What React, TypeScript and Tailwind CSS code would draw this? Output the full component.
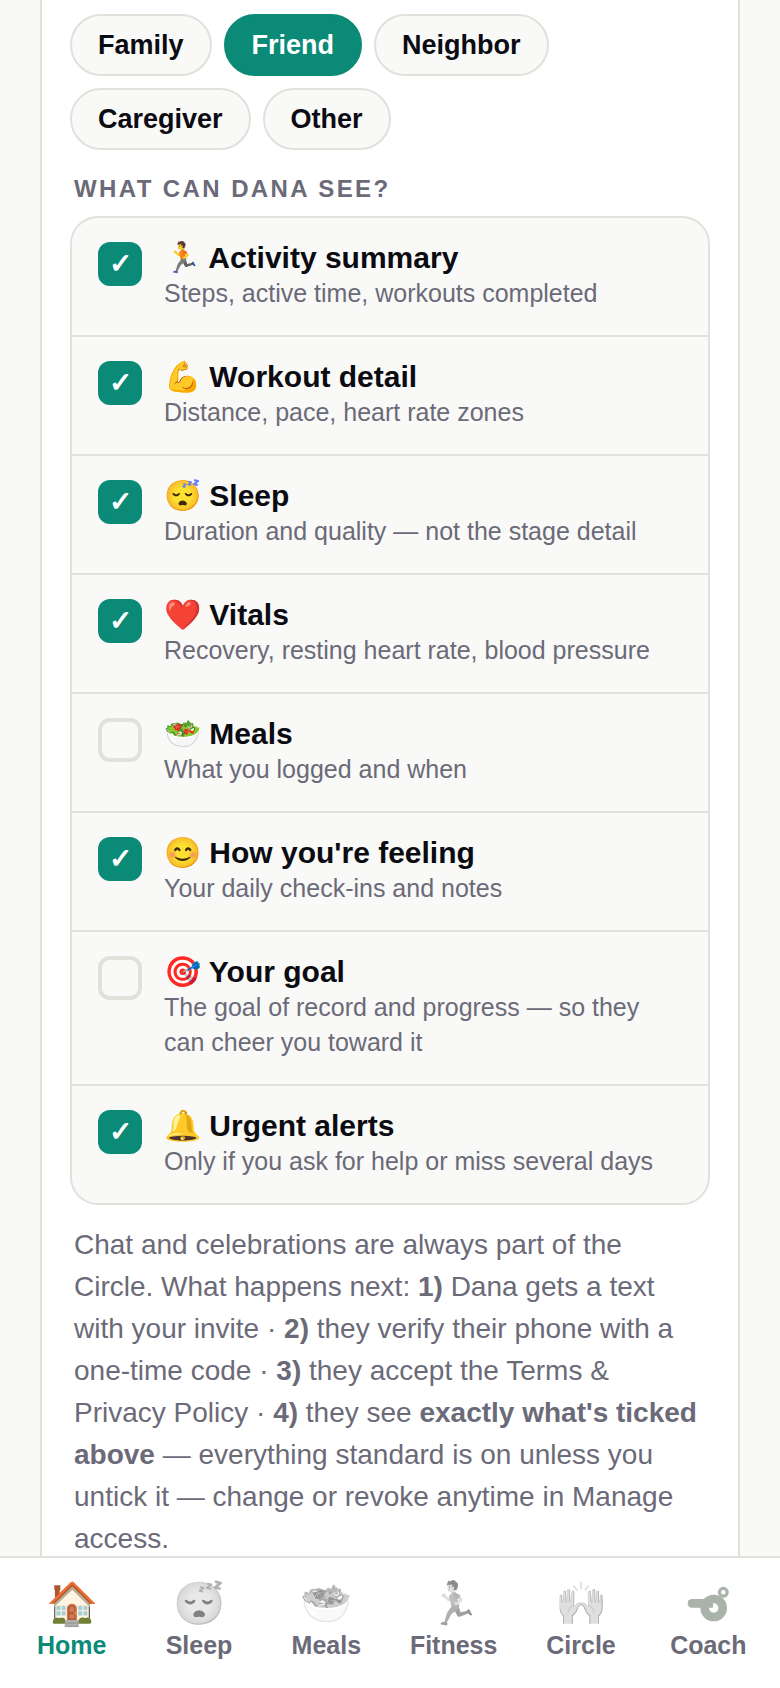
import { useState } from "react";
import type { ReactNode } from "react";

const relations = ["Family", "Friend", "Neighbor", "Caregiver", "Other"];

const permissions = [
  { id: "activity", emoji: "🏃", title: "Activity summary", text: "Steps, active time, workouts completed", on: true },
  { id: "workout", emoji: "💪", title: "Workout detail", text: "Distance, pace, heart rate zones", on: true },
  { id: "sleep", emoji: "😴", title: "Sleep", text: "Duration and quality — not the stage detail", on: true },
  { id: "vitals", emoji: "❤️", title: "Vitals", text: "Recovery, resting heart rate, blood pressure", on: true },
  { id: "meals", emoji: "🥗", title: "Meals", text: "What you logged and when", on: false },
  { id: "feeling", emoji: "😊", title: "How you're feeling", text: "Your daily check-ins and notes", on: true },
  { id: "goal", emoji: "🎯", title: "Your goal", text: "The goal of record and progress — so they can cheer you toward it", on: false },
  { id: "alerts", emoji: "🔔", title: "Urgent alerts", text: "Only if you ask for help or miss several days", on: true },
];

const WhistleIcon = () => (
  <svg viewBox="0 0 44 44" className="size-11 text-[#a9b3aa]" fill="none" aria-hidden="true">
    <path d="M6 17H27V25.7H6A4.3 4.3 0 0 1 6 17Z" fill="currentColor" />
    <circle cx="27.7" cy="26" r="9" stroke="currentColor" strokeWidth="8.6" />
    <circle cx="37.3" cy="10.3" r="3.9" stroke="currentColor" strokeWidth="3.2" />
  </svg>
);

const tabs: { label: string; icon: ReactNode }[] = [
  { label: "Home", icon: "🏠" },
  { label: "Sleep", icon: "😴" },
  { label: "Meals", icon: "🥗" },
  { label: "Fitness", icon: "🏃" },
  { label: "Circle", icon: "🙌" },
  { label: "Coach", icon: <WhistleIcon /> },
];

const App = () => {
  const [relation, setRelation] = useState<string>("Friend");
  const [shared, setShared] = useState<string[]>(permissions.filter((p) => p.on).map((p) => p.id));
  const [tab, setTab] = useState<string>("Home");

  const toggle = (id: string) => {
    setShared((prev) => (prev.includes(id) ? prev.filter((s) => s !== id) : [...prev, id]));
  };

  return (
    <div className="flex min-h-screen flex-col bg-[#f9f9f7] px-10 font-['Liberation_Sans',Arial,sans-serif] text-[#0b0b12]">
      <main className="flex-1 border-x-2 border-[#e1e1dc] bg-white px-7 pt-3.5 pb-32">
        <div className="flex flex-wrap gap-3">
          {relations.map((name) => (
            <button
              key={name}
              type="button"
              aria-pressed={relation === name}
              onClick={() => setRelation(name)}
              className={`rounded-full border-2 px-[26px] py-3 text-[27px] leading-[34px] font-bold ${
                relation === name
                  ? "border-[#0c8a78] bg-[#0c8a78] text-white"
                  : "border-[#e1e1dc] bg-[#f9f9f7]"
              }`}
            >
              {name}
            </button>
          ))}
        </div>

        <h2 className="mt-6 mb-3 px-1 text-[24px] leading-[30px] font-bold tracking-widest text-[#6b6a78] uppercase">
          What can Dana see?
        </h2>

        <div className="divide-y-2 divide-[#e1e1dc] overflow-hidden rounded-[28px] border-2 border-[#e1e1dc] bg-[#f9f9f7]">
          {permissions.map((p) => (
            <label key={p.id} className="flex cursor-pointer items-start gap-[22px] px-[26px] py-6">
              <span className="grid size-11 shrink-0 place-items-center">
                <input
                  type="checkbox"
                  checked={shared.includes(p.id)}
                  onChange={() => toggle(p.id)}
                  className="col-start-1 row-start-1 size-11 appearance-none rounded-xl border-4 border-[#e1e1dc] checked:border-[#0c8a78] checked:bg-[#0c8a78]"
                />
                {shared.includes(p.id) && (
                  <span className="pointer-events-none z-10 col-start-1 row-start-1 font-['Liberation_Sans'] text-[28px] leading-8 font-black text-white">
                    ✓
                  </span>
                )}
              </span>
              <span className="flex flex-col gap-0.5">
                <span className="text-[30px] leading-8 font-bold">
                  {p.emoji} {p.title}
                </span>
                <span className="text-[25px] leading-[35px] text-[#6b6a78]">{p.text}</span>
              </span>
            </label>
          ))}
        </div>

        <p className="mt-[19px] px-1 text-[28px] leading-[42px] text-[#6b6a78]">
          Chat and celebrations are always part of the Circle. What happens next: <b>1)</b> Dana gets a text with your
          invite · <b>2)</b> they verify their phone with a one-time code · <b>3)</b> they accept the Terms &amp; Privacy
          Policy · <b>4)</b> they see <b>exactly what's ticked above</b> — everything standard is on unless you untick it
          — change or revoke anytime in Manage access.
        </p>
      </main>

      <nav className="fixed inset-x-0 bottom-0 z-20 grid grid-cols-6 border-t-2 border-[#e1e1dc] bg-white px-2 pt-[22px] pb-7">
        {tabs.map((t) => (
          <button
            key={t.label}
            type="button"
            onClick={() => setTab(t.label)}
            className={`flex flex-col items-center gap-0.5 text-[25px] leading-[30px] font-bold ${
              tab === t.label ? "text-[#0c8a78]" : "text-[#6b6a78]"
            }`}
          >
            <span
              className={`flex h-12 items-center text-[42px] leading-[48px] ${
                tab === t.label || t.label === "Coach" ? "" : "opacity-60 grayscale"
              }`}
            >
              {t.icon}
            </span>
            {t.label}
          </button>
        ))}
      </nav>
    </div>
  );
};

export default App;
